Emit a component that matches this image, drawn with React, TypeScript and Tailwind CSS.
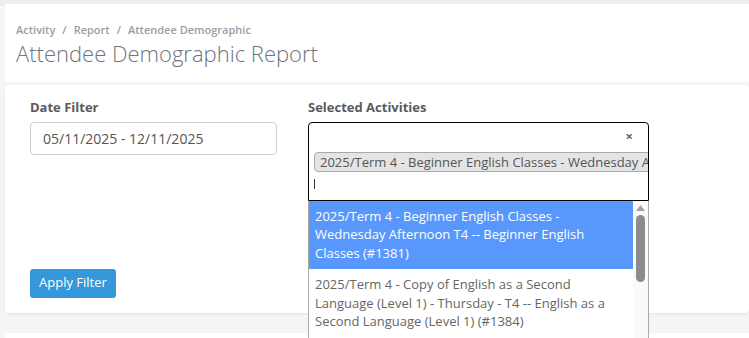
import React from 'react';

const options = [
  {
    id: 1381,
    label: '2025/Term 4 - Beginner English Classes - Wednesday Afternoon T4 -- Beginner English Classes (#1381)',
  },
  {
    id: 1384,
    label: '2025/Term 4 - Copy of English as a Second Language (Level 1) - Thursday - T4 -- English as a Second Language (Level 1) (#1384)',
  },
  {
    id: 1390,
    label: '2025/Term 4 - English Conversation Club - Friday Morning T4 -- Conversation Club (#1390)',
  },
];

const App: React.FC = () => {
  const [active] = React.useState(1381);

  return (
    <div className="h-screen overflow-hidden bg-[#f4f5f7] font-['Open_Sans',sans-serif] text-[#555]">
      <div className="h-[4px] bg-[#eceef1] shadow-[0_1px_2px_rgba(0,0,0,0.08)]" />

      <div className="ml-[5px] bg-white px-[11px] pt-[18px] pb-[14px]">
        <div className="flex items-center gap-[7px] text-[11px] font-semibold text-[#9a9ea6]">
          <span>Activity</span>
          <span>/</span>
          <span>Report</span>
          <span>/</span>
          <span>Attendee Demographic</span>
        </div>
        <h1 className="mt-[-1px] text-[22px] font-light leading-[30px] text-[#6e737c]">Attendee Demographic Report</h1>
      </div>

      <div className="ml-[5px] mt-[3px] rounded-sm bg-white px-[25px] pt-[13px] pb-[15px] shadow-[0_1px_2px_rgba(0,0,0,0.08)]">
        <div className="flex items-start gap-[31px]">
          <div className="w-[247px]">
            <label className="mb-[6px] block text-[13px] font-bold leading-[18px] text-[#5b5b5b]">Date Filter</label>
            <div className="flex h-[33px] items-center rounded-[4px] border border-[#cfcfcf] px-[12px] text-[14px] text-[#555]">
              05/11/2025 - 12/11/2025
            </div>
          </div>

          <div className="w-[341px]">
            <label className="mb-[6px] block text-[13px] font-bold leading-[18px] text-[#5b5b5b]">Selected Activities</label>
            <div className="relative">
              <div className="h-[79px] overflow-hidden rounded-t-[4px] border border-black bg-white">
                <div className="flex h-[29px] items-center justify-end pr-[15px] text-[13px] font-bold text-[#666]">×</div>
                <div className="ml-[5px] w-[400px] whitespace-nowrap rounded-[4px] border border-[#aaa] bg-[#e4e4e4] px-[5px] text-[13px] leading-[18px] text-[#555]">
                  2025/Term 4 - Beginner English Classes - Wednesday Afternoon T4
                </div>
                <div className="ml-[5px] mt-[7px] h-[10px] w-px bg-[#333]" />
              </div>

              <div className="absolute left-0 top-full z-10 flex h-[200px] w-full overflow-hidden border-x border-[#aaa] bg-white">
                <div className="flex-1">
                  {options.map(o => (
                    <div
                      key={o.id}
                      className={
                        o.id === active
                          ? 'bg-[#5897fb] px-[6px] pt-[6px] pb-[7px] text-[13px] leading-[18.5px] text-white'
                          : 'px-[6px] pt-[6px] pb-[7px] text-[13px] leading-[18.5px] text-[#666]'
                      }
                    >
                      {o.label}
                    </div>
                  ))}
                </div>
                <div className="flex w-[15px] flex-col items-center bg-[#fafafa] pt-[4px]">
                  <svg width="9" height="6" viewBox="0 0 9 6">
                    <path d="M0 6 L4.5 0 L9 6 Z" fill="#a3a3a3" />
                  </svg>
                  <div className="mt-[4px] h-[67px] w-[9px] rounded-full bg-[#8c8c8c]" />
                </div>
              </div>
            </div>
          </div>
        </div>

        <button className="mt-[68px] h-[29px] rounded-[3px] bg-[#3498db] px-[9px] text-[13px] text-white">
          Apply Filter
        </button>
      </div>

      <div className="ml-[5px] mt-[20px] h-[60px] bg-white" />
    </div>
  );
};

export default App;
